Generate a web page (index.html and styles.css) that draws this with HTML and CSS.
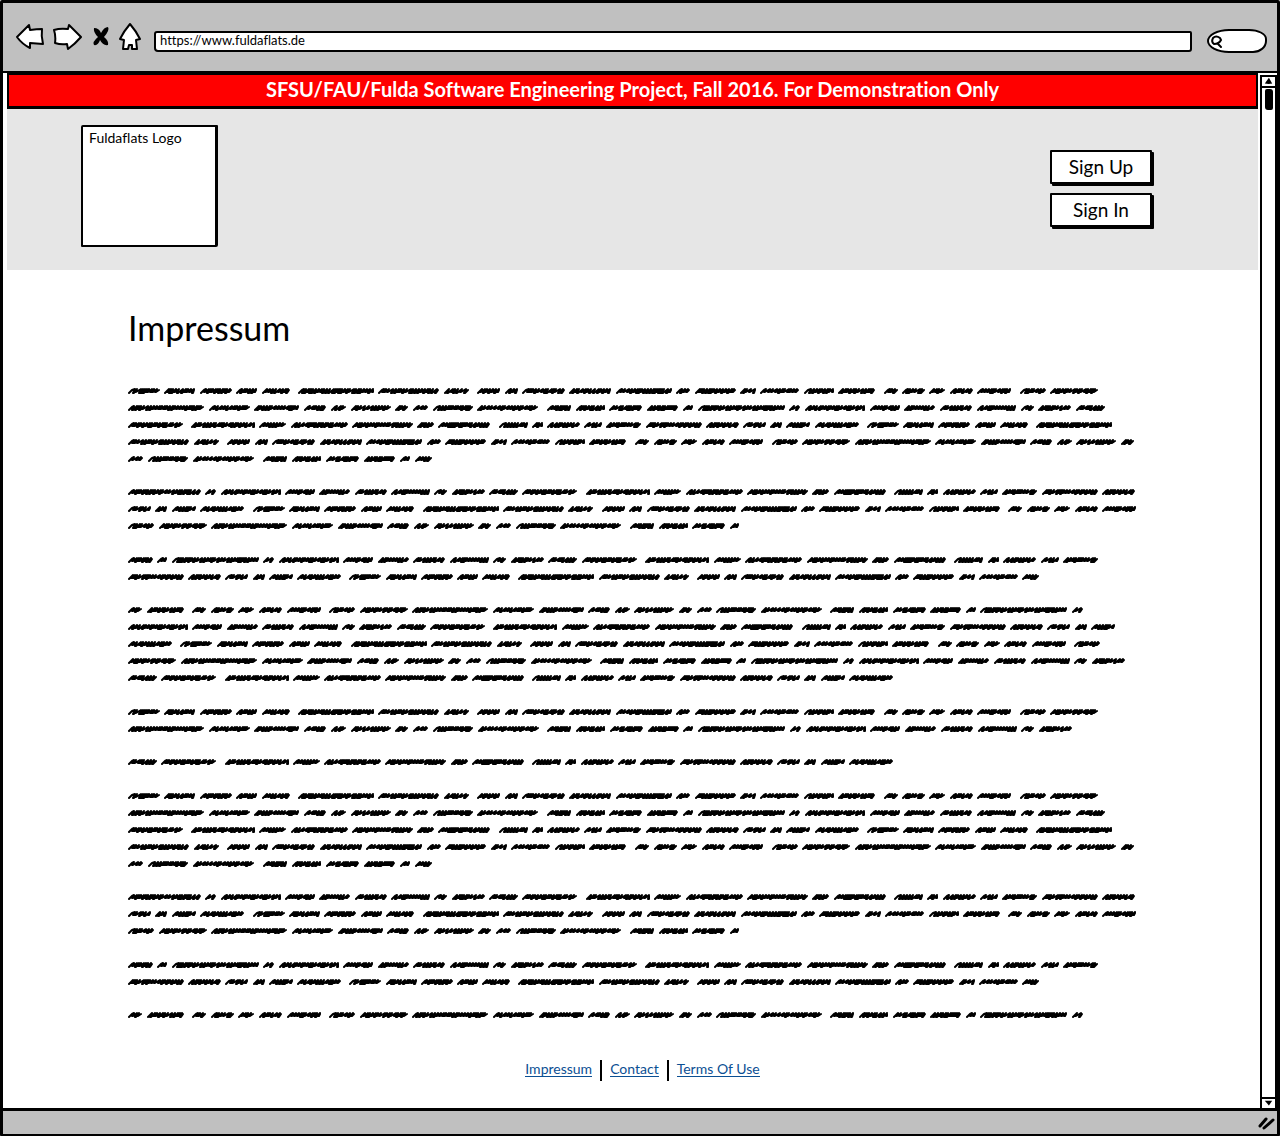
FILE: index.html
```html
<!DOCTYPE html>
<html lang="en">
<head>
<meta charset="utf-8">
<title>Fuldaflats - Impressum</title>
<link rel="stylesheet" href="styles.css">
</head>
<body>
<div class="browser">
  <div class="toolbar">
    <button class="nav back" aria-label="Back"><svg width="30" height="30" viewBox="0 0 30 30"><path class="hollow" d="M2 15 L14 3 L15 8 Q22 7 27 7 Q26 14 28 22 L15 21 L15 26 Q7 22 2 15Z"/></svg></button>
    <button class="nav forward" aria-label="Forward"><svg width="30" height="30" viewBox="0 0 30 30"><path class="hollow" d="M29 15 L17 3 L16 7 Q8 6 2 8 Q4 14 3 21 Q9 23 15 22 L16 27 Q23 22 29 15Z"/></svg></button>
    <button class="nav stop" aria-label="Stop"><svg width="18" height="22" viewBox="0 0 18 22"><path d="M2 2 Q7 2 9 7 Q12 1 16 1 Q18 4 12 11 Q17 15 16 19 Q11 20 8 14 Q6 20 2 19 Q0 16 6 11 Q1 6 2 2Z"/></svg></button>
    <button class="nav home" aria-label="Home"><svg width="24" height="30" viewBox="0 0 24 30"><path class="hollow" d="M12 2 Q18 9 22 17 L18 18 L19 27 L14 27 L14 23 L11 23 L10 27 L5 27 L6 18 L2 17 Q6 9 12 2Z"/></svg></button>
    <input class="address" type="text" aria-label="Address" value="https://www.fuldaflats.de">
    <label class="search">
      <svg width="14" height="18" viewBox="0 0 14 18"><path class="lens" d="M11 6 Q7 3 4 6 Q2 10 5 12 Q10 12 12 8 L11 6 M9 12 L12 15"/></svg>
      <input type="text" aria-label="Search">
    </label>
  </div>
  <div class="window">
    <div class="page">
      <div class="banner">SFSU/FAU/Fulda Software Engineering Project, Fall 2016. For Demonstration Only</div>
      <header class="site-header">
        <div class="logo">Fuldaflats Logo</div>
        <div class="actions">
          <button class="action">Sign Up</button>
          <button class="action">Sign In</button>
        </div>
      </header>
      <main class="content">
        <h1>Impressum</h1>
        <div class="copy" id="copy"></div>
      </main>
      <footer class="links">
        <a href="#">Impressum</a>
        <a href="#">Contact</a>
        <a href="#">Terms Of Use</a>
      </footer>
    </div>
    <div class="scrollbar">
      <svg class="cap" width="13" height="11" viewBox="0 0 13 11"><path d="M7 1 L11 8 Q7 9 2 8Z"/></svg>
      <div class="track"><div class="thumb"></div></div>
      <svg class="cap bottom" width="13" height="11" viewBox="0 0 13 11"><path d="M2 2 L11 2 L7 8Z"/></svg>
    </div>
  </div>
  <div class="statusbar">
    <svg width="18" height="16" viewBox="0 0 18 16"><path class="grip" d="M3 11 L9 4 M7 13 L16 5"/></svg>
  </div>
</div>
<script src="scribble.js"></script>
</body>
</html>
```
FILE: styles.css
```css
* { box-sizing: border-box; }

body {
  margin: 0;
  background: #fff;
  color: #000;
  font-family: Lato, "Open Sans", sans-serif;
  font-variant-ligatures: none;
}

.browser {
  display: flex;
  flex-direction: column;
  min-height: 100vh;
  border: 3px solid #000;
  border-radius: 2px;
}

.toolbar {
  display: flex;
  align-items: center;
  height: 70px;
  padding: 0 10px 0 12px;
  background: #c0c0c0;
  border-bottom: 2px solid #000;
}

.nav {
  display: block;
  padding: 0;
  border: 0;
  background: none;
  line-height: 0;
}

.forward { margin-left: 7px; }
.stop { margin-left: 10px; }
.home { margin: 0 12px 0 8px; }

.hollow {
  fill: #fff;
  stroke: #000;
  stroke-width: 2;
  stroke-linejoin: round;
}

.address {
  flex: 1;
  min-width: 0;
  height: 21px;
  margin-top: 8px;
  padding: 0 4px 2px;
  border: 2px solid #000;
  border-radius: 3px 2px 3px 4px;
  background: #fff;
  color: #000;
  font: 13px Lato, "Open Sans", sans-serif;
  font-variant-ligatures: none;
}

.search {
  display: flex;
  align-items: center;
  width: 60px;
  height: 24px;
  margin: 8px 0 0 15px;
  border: 2px solid #000;
  border-radius: 22px 18px 14px 22px / 12px 10px 12px 12px;
  background: #fff;
}

.search svg { flex: none; }

.search input {
  width: 36px;
  padding: 0;
  border: 0;
  background: none;
}

.lens, .grip {
  fill: none;
  stroke: #000;
  stroke-width: 2;
  stroke-linecap: round;
}

.grip { stroke-width: 3; }

.window {
  display: flex;
  flex: 1;
}

.page {
  flex: 1;
  min-width: 0;
  padding: 0 2px 0 4px;
}

.banner {
  height: 36px;
  border: 2px solid #000;
  border-bottom-width: 3px;
  background: #f00;
  color: #fff;
  font-size: 20px;
  font-weight: 700;
  line-height: 29px;
  text-align: center;
}

.site-header {
  display: flex;
  justify-content: space-between;
  height: 161px;
  padding: 16px 106px 0 74px;
  background: #e6e6e6;
}

.logo {
  width: 137px;
  height: 122px;
  padding: 2px 6px;
  border: 3px solid #000;
  border-width: 2px 3px 2px 2px;
  border-radius: 2px 1px 2px 1px;
  background: #fff;
  font-size: 14px;
  line-height: 18px;
}

.actions {
  display: flex;
  flex-direction: column;
  gap: 9px;
  padding-top: 25px;
}

.action {
  width: 102px;
  height: 34px;
  padding: 0 0 2px;
  border: 2px solid #000;
  border-radius: 1px;
  background: #fff;
  box-shadow: 2px 2px 0 #000;
  color: #000;
  font: 19px Lato, "Open Sans", sans-serif;
}

.content { padding: 38px 0 0 121px; }

h1 {
  margin: 0 0 35px;
  font-size: 34px;
  font-weight: 400;
  line-height: 40px;
}

.paragraph { margin-bottom: 16px; }
.paragraph:nth-child(even) { margin-bottom: 17px; }

.line {
  display: block;
  height: 17px;
  overflow: visible;
}

.line path {
  fill: none;
  stroke: #000;
  stroke-width: 2;
  stroke-linecap: round;
  stroke-linejoin: round;
}

.links {
  display: flex;
  justify-content: center;
  padding: 19px 0 27px 20px;
}

.links a {
  height: 17px;
  margin: 0 0 4px;
  border-bottom: 1px solid #0b4f93;
  color: #0b4f93;
  font-size: 14px;
  line-height: 17px;
  text-decoration: none;
}

.links a + a { margin-left: 18px; position: relative; }

.links a + a::before {
  content: "";
  position: absolute;
  left: -10px;
  top: 0;
  width: 2px;
  height: 21px;
  background: #000;
}

.scrollbar {
  display: flex;
  flex-direction: column;
  width: 17px;
  margin: 2px 0 0;
  border: 2px solid #000;
  border-bottom: 0;
}

.cap { border-bottom: 2px solid #000; }
.cap.bottom { border-top: 2px solid #000; border-bottom: 0; }
.track { flex: 1; padding: 1px 3px; }

.thumb {
  width: 8px;
  height: 21px;
  border-radius: 2px 3px 2px 3px;
  background: #000;
}

.statusbar {
  display: flex;
  align-items: center;
  justify-content: flex-end;
  height: 26px;
  padding-right: 2px;
  border-top: 3px solid #000;
  background: #c0c0c0;
}
```
FILE: scribble.js
```js
// Greeked placeholder copy. Each number is a word width; 0 marks the end of a sentence.
const source = [
  32,31,32,21,28,0,76,61,25,0,23,13,43,42,56,14,41,16,39,30,37,0,14,23,16,23,34,0,
  26,48,76,41,45,22,15,40,13,15,40,61,0,24,29,33,31,10,87,11,60,30,31,32,39,13,33,29,55,0,
  64,27,57,61,17,52,0,29,11,33,18,35,56,33,23,12,24,44,0
];
const words = [];
for (const w of source) {
  if (w) words.push({ width: w, end: false });
  else words[words.length - 1].end = true;
}

// A line is its full width, its first and last word, and the widths of a
// cut leading word and a cut trailing word.
const long = [[970,0,25],[977,26,50],[984,51,74],[1006,75,101],[304,33,40,0,17]];
const second = [[1007,42,64,73],[1008,65,92],[611,24,38,0,9]];
const third = [[970,40,62,25],[911,63,85,0,17]];
const fourth = [955,18,42,14];
const paragraphs = [
  long,
  second,
  third,
  [fourth,[987,43,67],[972,68,93],[997,25,49],[765,50,68]],
  [[970,0,25],[944,26,49]],
  [[765,50,68]],
  long,
  second,
  third,
  [fourth]
];

function strokes(x, width, seed) {
  let s = seed * 7919 + 13;
  const rnd = () => (s = (s * 1103515245 + 12345) % 2147483648) / 2147483648;
  const right = x + width - 1;
  let px = x + 1;
  let d = "M" + px + " 10L" + (px + 3) + " 7";
  while (px < right - 4) {
    const r = rnd();
    const step = r < 0.35 ? 2 : r < 0.85 ? 3 : 4;
    const top = Math.min(px + step + 2, right);
    const low = rnd() < 0.5 ? 9 : 10;
    d += "L" + top + " 6L" + (px + step) + " " + low + "l1 0";
    px += step;
  }
  return d + "L" + right + " 7";
}

function drawLine([width, first, last, lead, tail]) {
  const run = [];
  if (lead) run.push({ width: lead, end: false, seed: 3 });
  for (let i = first; i <= last; i++) {
    const n = i % words.length;
    run.push({ width: words[n].width, end: words[n].end, seed: n + 1 });
  }
  if (tail) run.push({ width: tail, end: false, seed: 5 });

  // Share the space that the words leave over between the gaps; a sentence gap is wider.
  const inner = run.slice(0, -1);
  const used = run.reduce((sum, w) => sum + w.width, 0);
  const wide = inner.filter(w => w.end).length;
  const gap = (width - used - wide * 4) / inner.length;
  let x = 0, d = "";
  for (const w of run) {
    d += strokes(Math.round(x), w.width, w.seed);
    x += w.width + gap + (w.end ? 4 : 0);
  }
  return '<svg class="line" width="' + width + '" height="17" aria-hidden="true"><path d="' + d + '"/></svg>';
}

document.getElementById("copy").innerHTML = paragraphs
  .map(lines => '<div class="paragraph">' + lines.map(drawLine).join("") + "</div>")
  .join("");
```
